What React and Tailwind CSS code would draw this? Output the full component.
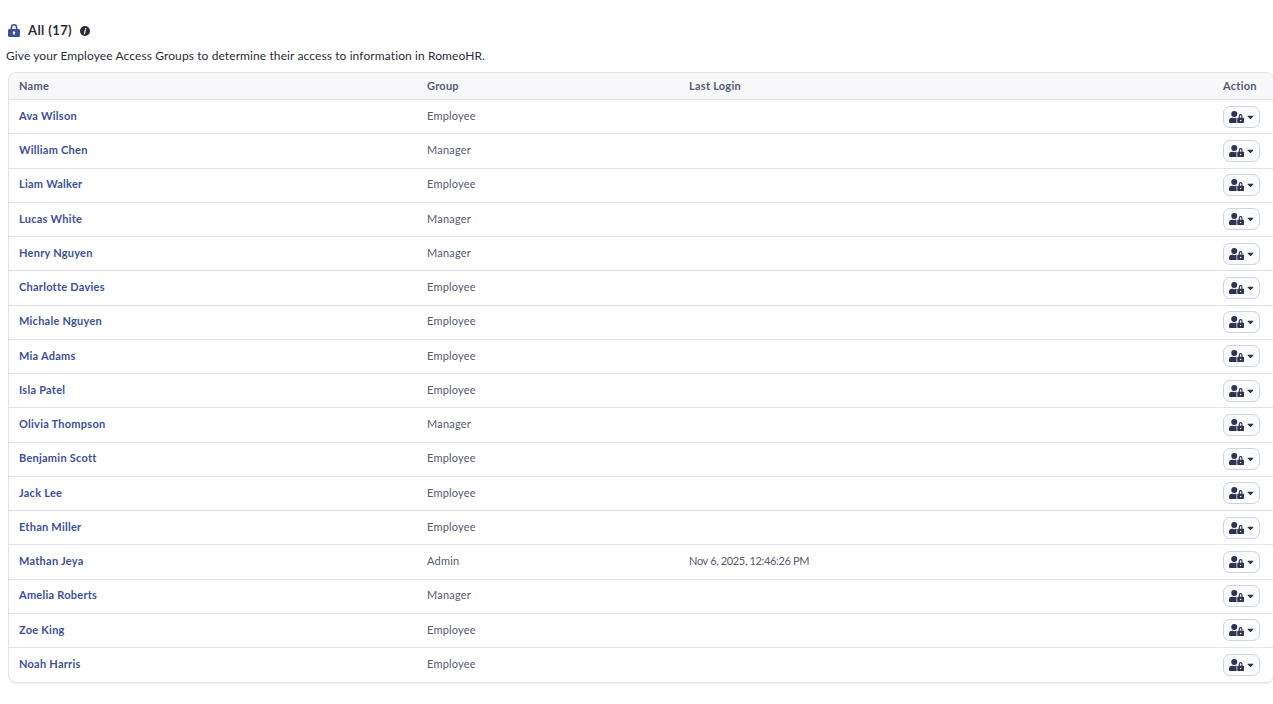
import React from 'react';
import { FaUserLock, FaCaretDown } from 'react-icons/fa';

const employees = [
    { name: 'Ava Wilson', group: 'Employee' },
    { name: 'William Chen', group: 'Manager' },
    { name: 'Liam Walker', group: 'Employee' },
    { name: 'Lucas White', group: 'Manager' },
    { name: 'Henry Nguyen', group: 'Manager' },
    { name: 'Charlotte Davies', group: 'Employee' },
    { name: 'Michale Nguyen', group: 'Employee' },
    { name: 'Mia Adams', group: 'Employee' },
    { name: 'Isla Patel', group: 'Employee' },
    { name: 'Olivia Thompson', group: 'Manager' },
    { name: 'Benjamin Scott', group: 'Employee' },
    { name: 'Jack Lee', group: 'Employee' },
    { name: 'Ethan Miller', group: 'Employee' },
    { name: 'Mathan Jeya', group: 'Admin', lastLogin: 'Nov 6, 2025, 12:46:26 PM' },
    { name: 'Amelia Roberts', group: 'Manager' },
    { name: 'Zoe King', group: 'Employee' },
    { name: 'Noah Harris', group: 'Employee' },
];

const LockIcon = () => (
    <svg viewBox="0 0 12 13" className="w-[12px] h-[13px] mt-[-1px] text-[#3b5199]">
        <path
            fill="currentColor"
            fillRule="evenodd"
            d="M2.600 5V3.400a3.400 3.400 0 0 1 6.800 0V5h1.100C11.300 5 12 5.700 12 6.500v5c0 .8-.7 1.500-1.500 1.500h-9C.7 13 0 12.300 0 11.500v-5C0 5.700.7 5 1.500 5zm1.600 0h3.600V3.400a1.800 1.800 0 0 0-3.600 0zM6 7.300a1.200 1.200 0 0 0-.7 2.200v1.300h1.400V9.500A1.200 1.200 0 0 0 6 7.300z"
        />
    </svg>
);

const InfoIcon = () => (
    <svg viewBox="0 0 10 10" className="ml-[8px] w-[10px] h-[10px] text-[#2a2d3a]">
        <circle cx="5" cy="5" r="5" fill="currentColor" />
        <circle cx="5.700" cy="2.700" r="0.800" fill="#fff" />
        <path d="M5.300 4.200 4.500 7.600" stroke="#fff" strokeWidth="1.200" strokeLinecap="round" fill="none" />
    </svg>
);

const Row = ({ employee, isLast }) => (
    <div className={`grid grid-cols-[408px_262px_1fr_50px] items-center h-[34.25px] pl-[10px] ${isLast ? '' : 'border-b border-[#e2e3ea]'}`}>
        <a className="mb-[1px] text-[11px] font-bold text-[#3b5199] tracking-[0.25px]">{employee.name}</a>
        <span className="mb-[1px] text-[11px] text-[#555a73] tracking-[0.2px]">{employee.group}</span>
        <span className="mb-[1px] text-[11px] text-[#555a73] tracking-[-0.35px]">{employee.lastLogin}</span>
        <div className="flex">
            <button className="flex items-center justify-center gap-[3px] w-[37px] h-[22px] rounded-[7px] border border-[#cfd3e2] bg-[#fafbfd] text-[#2d3350]">
                <FaUserLock className="w-[15px] h-[12px]" />
                <FaCaretDown className="w-[7px] h-[10px]" />
            </button>
        </div>
    </div>
);

const App = () => {
    return (
        <div className="w-[1273px] h-[704px] overflow-hidden bg-white font-['Lato',sans-serif] pt-[22px] text-[#2a2d3a]">
            <div className="flex items-center h-[17px] pl-[8px]">
                <LockIcon />
                <span className="ml-[8px] text-[13px] font-bold tracking-[0.4px] text-[#2a2d3a]">All (17)</span>
                <InfoIcon />
            </div>
            <p className="mt-[9px] pl-[6px] text-[12px] leading-[16px] tracking-[0.1px]">
                Give your Employee Access Groups to determine their access to information in RomeoHR.
            </p>
            <div className="mt-[8px] ml-[8px] mr-[-1px] rounded-[8px] border border-[#e2e3ea] shadow-[0_1px_0_#eeeef2]">
                <div className="grid grid-cols-[408px_262px_1fr_50px] items-center h-[27px] pl-[10px] bg-[#f8f8fb] border-b border-[#e2e3ea] rounded-t-[8px] text-[11px] font-bold text-[#555a73] tracking-[0.25px]">
                    <span>Name</span>
                    <span>Group</span>
                    <span>Last Login</span>
                    <span>Action</span>
                </div>
                {employees.map((employee, i) => (
                    <Row key={employee.name} employee={employee} isLast={i === employees.length - 1} />
                ))}
            </div>
        </div>
    );
};

export default App;
